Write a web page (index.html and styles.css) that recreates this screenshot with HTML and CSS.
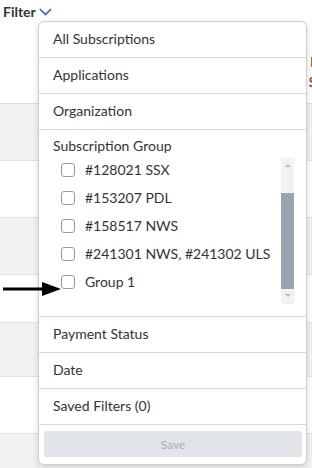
FILE: index.html
```html
<!DOCTYPE html>
<html lang="en">
<head>
    <meta charset="UTF-8">
    <title>Filter</title>
    <meta name="viewport" content="width=device-width, initial-scale=1.0">
    <link rel="stylesheet" href="styles.css">
</head>
<body>
    <div class="toolbar">
        <span class="filter-label">Filter</span>
        <svg class="chevron" width="13" height="8" viewBox="0 0 13 8">
            <path d="M1 1.2 L6.5 6.5 L12 1.2" fill="none" stroke="#2f6fcf" stroke-width="1.7"/>
        </svg>
    </div>

    <div class="table">
        <div class="table-head">
            <span class="head-a">I</span>
            <span class="head-b">S</span>
        </div>
        <div class="row gray"></div>
        <div class="row"></div>
        <div class="row gray"></div>
        <div class="row short"></div>
        <div class="row gray mid"></div>
        <div class="row"></div>
        <div class="row gray"></div>
    </div>

    <div class="panel">
        <div class="item">All Subscriptions</div>
        <div class="item">Applications</div>
        <div class="item">Organization</div>
        <div class="group">
            <div class="group-title">Subscription Group</div>
            <div class="list">
                <div class="options">
                    <label class="option"><span class="box"></span>#128021 SSX</label>
                    <label class="option"><span class="box"></span>#153207 PDL</label>
                    <label class="option"><span class="box"></span>#158517 NWS</label>
                    <label class="option"><span class="box"></span>#241301 NWS, #241302 ULS</label>
                    <label class="option"><span class="box"></span>Group 1</label>
                </div>
                <div class="scrollbar">
                    <span class="arrow-up"></span>
                    <span class="thumb"></span>
                    <span class="arrow-down"></span>
                </div>
            </div>
        </div>
        <div class="item">Payment Status</div>
        <div class="item">Date</div>
        <div class="item">Saved Filters (0)</div>
        <div class="actions">
            <button class="save" disabled>Save</button>
        </div>
    </div>

    <svg class="pointer" width="64" height="18" viewBox="0 0 64 18">
        <line x1="3" y1="9" x2="46" y2="9" stroke="#000" stroke-width="3"/>
        <polygon points="42,2 61,9 42,16" fill="#000"/>
    </svg>
</body>
</html>
```

FILE: styles.css
```css
body {
    margin: 0;
    font-family: Lato, "Open Sans", sans-serif;
    color: #333;
    background-color: #fff;
    overflow: hidden;
}
.toolbar {
    height: 22px;
    padding-left: 3px;
    display: flex;
    align-items: center;
    gap: 3px;
}
.filter-label {
    font-size: 14px;
    font-weight: bold;
    color: #333;
}
.chevron {
    margin-top: 1px;
}
.table-head {
    height: 82px;
    border-bottom: 1px solid #dcdcdc;
    display: flex;
    flex-direction: column;
    align-items: flex-end;
    padding: 30px 0 0 0;
    box-sizing: border-box;
    font-size: 13px;
    font-weight: bold;
    line-height: 20px;
}
.head-a {
    color: #333;
    margin-right: -2px;
}
.head-b {
    color: #b03a2e;
    margin-right: -4px;
}
.row {
    height: 56px;
    border-bottom: 1px solid #e2e2e2;
}
.row.gray {
    background-color: #f2f2f2;
}
.row.short {
    height: 47px;
}
.row.mid {
    height: 53px;
}
.panel {
    position: absolute;
    left: 38px;
    top: 21px;
    width: 269px;
    height: 444px;
    box-sizing: border-box;
    background-color: #fff;
    border: 1px solid #cfcfcf;
    border-radius: 6px;
    box-shadow: 0 2px 6px rgba(0, 0, 0, 0.15);
    display: flex;
    flex-direction: column;
}
.item {
    height: 36px;
    flex-shrink: 0;
    box-sizing: border-box;
    border-bottom: 1px solid #d9d9d9;
    padding: 0 0 3px 14px;
    display: flex;
    align-items: center;
    font-size: 14px;
}
.group {
    height: 186px;
    flex-shrink: 0;
    border-bottom: 1px solid #d9d9d9;
}
.group-title {
    padding: 6px 0 0 14px;
    font-size: 14px;
    line-height: 20px;
}
.list {
    display: flex;
    height: 148px;
}
.options {
    flex: 1;
    display: flex;
    flex-direction: column;
    padding-left: 22px;
}
.option {
    height: 28px;
    display: flex;
    align-items: center;
    gap: 10px;
    font-size: 14px;
    padding-bottom: 1px;
    box-sizing: border-box;
}
.box {
    width: 14px;
    height: 14px;
    box-sizing: border-box;
    border: 1.5px solid #9a9a9a;
    border-radius: 3px;
}
.scrollbar {
    width: 13px;
    margin: 2px 12px 0 0;
    background-color: #f1f2f6;
    display: flex;
    flex-direction: column;
    align-items: center;
}
.arrow-up,
.arrow-down {
    width: 0;
    height: 0;
    border-left: 3.5px solid transparent;
    border-right: 3.5px solid transparent;
}
.arrow-up {
    margin: 6px 0 0;
    border-bottom: 3.5px solid #b5b9c2;
}
.arrow-down {
    margin: 5px 0 0;
    border-top: 3.5px solid #b5b9c2;
}
.thumb {
    width: 13px;
    height: 96px;
    margin-top: 26px;
    background-color: #9ba2b2;
}
.actions {
    padding: 6px 4px 0 5px;
}
.save {
    width: 100%;
    height: 26px;
    border: none;
    border-radius: 3px;
    background-color: #e1e4e9;
    color: #a9aeb8;
    font-family: Lato, sans-serif;
    font-size: 12px;
}
.pointer {
    position: absolute;
    left: 0;
    top: 280px;
}
```
